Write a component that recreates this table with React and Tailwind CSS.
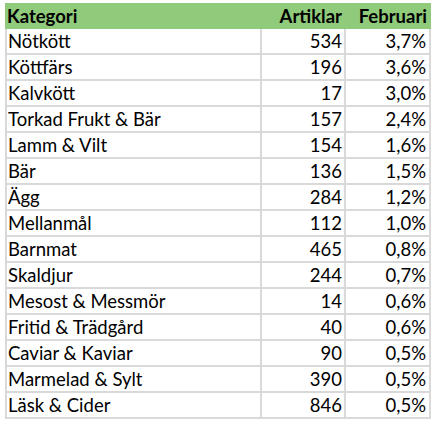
const rows = [
  ["Nötkött", 534, "3,7%"],
  ["Köttfärs", 196, "3,6%"],
  ["Kalvkött", 17, "3,0%"],
  ["Torkad Frukt & Bär", 157, "2,4%"],
  ["Lamm & Vilt", 154, "1,6%"],
  ["Bär", 136, "1,5%"],
  ["Ägg", 284, "1,2%"],
  ["Mellanmål", 112, "1,0%"],
  ["Barnmat", 465, "0,8%"],
  ["Skaldjur", 244, "0,7%"],
  ["Mesost & Messmör", 14, "0,6%"],
  ["Fritid & Trädgård", 40, "0,6%"],
  ["Caviar & Kaviar", 90, "0,5%"],
  ["Marmelad & Sylt", 390, "0,5%"],
  ["Läsk & Cider", 846, "0,5%"],
];

export default function App() {
  return (
    <div className="w-[438px] h-[428px] bg-white pt-[3px] pl-[5px] font-['Lato','Liberation_Sans',sans-serif] text-[18.5px] leading-none text-black">
      <div className="w-[426px]">
        <div className="grid grid-cols-[257px_84px_85px] h-[26px] bg-[#8fcb7b] font-bold items-center">
          <div className="pl-[2px]">Kategori</div>
          <div className="text-right pr-[4px]">Artiklar</div>
          <div className="text-right pr-[4px]">Februari</div>
        </div>
        {rows.map(([name, count, pct]) => (
          <div
            key={name}
            className="grid grid-cols-[257px_84px_85px] h-[26px] border-b-2 border-[#d9d9d9]"
          >
            <div className="flex items-center pl-[1px] border-l-2 border-r-2 border-[#d9d9d9]">
              {name}
            </div>
            <div className="flex items-center justify-end pr-[2px] border-r-2 border-[#d9d9d9]">
              {count}
            </div>
            <div className="flex items-center justify-end pr-[3px] border-r-2 border-[#d9d9d9]">
              {pct}
            </div>
          </div>
        ))}
      </div>
    </div>
  );
}
